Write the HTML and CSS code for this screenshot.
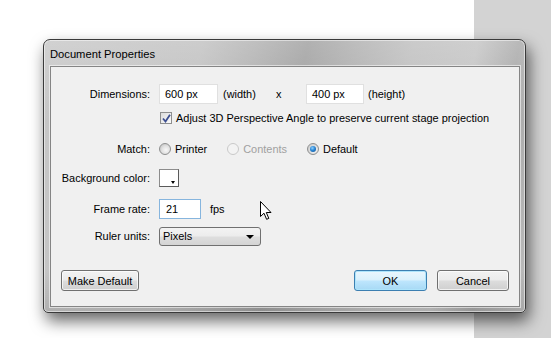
FILE: index.html
```html
<!DOCTYPE html>
<html>
<head>
<meta charset="utf-8">
<link rel="stylesheet" href="styles.css">
</head>
<body>
<div class="desk"></div>
<div class="strip"></div>

<div class="dialog">
  <div class="titlebar">Document Properties</div>
  <div class="content">
    <div class="row row-dim">
      <span class="label">Dimensions:</span>
      <span class="field w59">600 px</span>
      <span class="unit">(width)</span>
      <span class="times">x</span>
      <span class="field w58">400 px</span>
      <span class="unit2">(height)</span>
    </div>
    <div class="row row-check">
      <span class="label"></span>
      <span class="checkbox">
        <svg width="9" height="9" viewBox="0 0 9 9"><path d="M1 4.5 L3.5 7.5 L8 0.8" fill="none" stroke="#3d4f91" stroke-width="1.8"/></svg>
      </span>
      <span class="checktext">Adjust 3D Perspective Angle to preserve current stage projection</span>
    </div>
    <div class="row row-match">
      <span class="label">Match:</span>
      <span class="opts">
        <span class="opt"><span class="radio"></span>Printer</span>
        <span class="opt disabled"><span class="radio radio-off"></span>Contents</span>
        <span class="opt"><span class="radio radio-on"><span class="dot"></span></span>Default</span>
      </span>
    </div>
    <div class="row row-bg">
      <span class="label">Background color:</span>
      <span class="swatch"><span class="swatch-arrow"></span></span>
    </div>
    <div class="row row-fps">
      <span class="label">Frame rate:</span>
      <span class="field w42 focus">21</span>
      <span class="fps">fps</span>
    </div>
    <div class="row row-ruler">
      <span class="label">Ruler units:</span>
      <span class="select">Pixels<span class="sel-arrow"></span></span>
    </div>
    <div class="buttons">
      <span class="btn btn-make">Make Default</span>
      <span class="spacer"></span>
      <span class="btn btn-ok">OK</span>
      <span class="btn btn-cancel">Cancel</span>
    </div>
  </div>
</div>

<svg class="cursor" width="13" height="20" viewBox="0 0 13 20">
  <path d="M0.5 0.5 L0.5 15.5 L4 12.2 L6.6 18.3 L8.8 17.4 L6.3 11.5 L11 11.5 Z" fill="#fff" stroke="#000" stroke-width="1" stroke-linejoin="round"/>
</svg>
</body>
</html>
```

FILE: styles.css
```css
html, body {
  margin: 0;
  padding: 0;
}
body {
  width: 551px;
  height: 338px;
  display: flex;
  background: #fff;
  font-family: "Liberation Sans", Arial, sans-serif;
  font-size: 10.95px;
  color: #000;
  overflow: hidden;
  position: relative;
}
.desk {
  flex: 1;
  background: #fff;
}
.strip {
  width: 77px;
  background: #d3d3d3;
}

.dialog {
  position: absolute;
  left: 43px;
  top: 39px;
  width: 483px;
  height: 274px;
  box-sizing: border-box;
  border: 1px solid #3a3a3a;
  border-radius: 7px 7px 5px 5px;
  background:
    linear-gradient(180deg, rgba(255,255,255,0.2) 0%, rgba(255,255,255,0) 30%, rgba(0,0,0,0) 85%, rgba(0,0,0,0.1) 100%),
    linear-gradient(100deg, #c6c6c6 0%, #c0c0c0 30%, #b0b0b0 40%, #9e9e9e 50%, #acacac 58%, #bebebe 70%, #c3c3c3 82%, #a8a8a8 90%, #bcbcbc 100%);
  box-shadow: inset 0 0 0 1px rgba(255,255,255,0.5), 3px 8px 16px rgba(0,0,0,0.6);
  display: flex;
  flex-direction: column;
}
.titlebar {
  height: 26px;
  line-height: 28px;
  padding-left: 6px;
  font-size: 11.2px;
  color: #000;
  flex: none;
}
.content {
  margin: 0 5px 5px 6px;
  flex: 1;
  background: #f0f0f0;
  border: 1px solid #858585;
  box-shadow: 0 0 0 1px rgba(255,255,255,0.55);
  display: flex;
  flex-direction: column;
  padding: 17px 10px 15px 0;
}

.row {
  display: flex;
  align-items: center;
  height: 20px;
  white-space: nowrap;
}
.label {
  width: 99px;
  margin-right: 9px;
  text-align: right;
  flex: none;
}
.row-check { margin-top: 4px; }
.row-match { margin-top: 11px; }
.row-bg { margin-top: 9px; }
.row-fps { margin-top: 11px; }
.row-ruler { margin-top: 7px; }

.field {
  box-sizing: border-box;
  height: 20px;
  background: #fff;
  border: 1px solid #e0e0e0;
  padding-left: 5px;
  line-height: 18px;
}
.w59 { width: 59px; }
.w58 { width: 58px; }
.w42 { width: 42px; padding-left: 6px; }
.focus { border-color: #86b5de; }
.unit { width: 58px; padding-left: 5px; box-sizing: border-box; }
.times { width: 30px; }
.unit2 { padding-left: 4px; }
.fps { margin-left: 9px; }

.checkbox {
  box-sizing: border-box;
  width: 12px;
  height: 12px;
  margin-left: 1px;
  margin-right: 4px;
  border: 1px solid #8e8f8f;
  background: linear-gradient(135deg, #dcdcdc, #fbfbfb);
  display: flex;
  align-items: center;
  justify-content: center;
}

.opts {
  display: flex;
  gap: 20px;
}
.opt {
  display: flex;
  align-items: center;
}
.opt.disabled { color: #a0a0a0; }
.radio {
  box-sizing: border-box;
  width: 12px;
  height: 12px;
  margin-right: 4px;
  border-radius: 50%;
  border: 1px solid #8e8f8f;
  background: radial-gradient(circle at 60% 60%, #f8f8f8 0%, #e2e2e2 45%, #cfcfcf 70%, #f4f4f4 100%);
  display: flex;
  align-items: center;
  justify-content: center;
}
.radio-off {
  border-color: #c9c9c9;
  background: #f3f3f3;
}
.dot {
  width: 6px;
  height: 6px;
  border-radius: 50%;
  background: radial-gradient(circle at 40% 35%, #8fd1ff 0%, #2a86d4 45%, #0c4a8c 100%);
}

.swatch {
  box-sizing: border-box;
  width: 20px;
  height: 18px;
  background: #fff;
  border: 1px solid #8c8c8c;
  border-right-color: #5a5a5a;
  border-bottom-color: #5a5a5a;
  position: relative;
}
.swatch-arrow {
  position: absolute;
  right: 3px;
  bottom: 2px;
  width: 0;
  height: 0;
  border-left: 2.5px solid transparent;
  border-right: 2.5px solid transparent;
  border-top: 3px solid #000;
}

.select {
  box-sizing: border-box;
  width: 102px;
  height: 19px;
  border: 1px solid #707070;
  border-radius: 3px;
  background: linear-gradient(180deg, #f3f3f3 0%, #ececec 48%, #dedede 52%, #d4d4d4 100%);
  padding-left: 3px;
  line-height: 16px;
  position: relative;
}
.sel-arrow {
  position: absolute;
  right: 6px;
  top: 7px;
  width: 0;
  height: 0;
  border-left: 4px solid transparent;
  border-right: 4px solid transparent;
  border-top: 4px solid #000;
}

.buttons {
  margin-top: auto;
  display: flex;
  align-items: center;
  padding-left: 10px;
}
.spacer { flex: 1; }
.btn {
  box-sizing: border-box;
  height: 21px;
  border: 1px solid #707070;
  border-radius: 3px;
  background: linear-gradient(180deg, #f2f2f2 0%, #ebebeb 48%, #dddddd 52%, #cfcfcf 100%);
  box-shadow: inset 0 0 0 1px rgba(255,255,255,0.7);
  display: flex;
  align-items: center;
  justify-content: center;
}
.btn-make { width: 78px; }
.btn-ok {
  width: 73px;
  border-color: #3c7fb1;
  background: linear-gradient(180deg, #eaf6fd 0%, #d9f0fc 48%, #bee6fd 52%, #a7d9f5 100%);
  box-shadow: inset 0 0 0 1px #aee4fb;
}
.btn-cancel {
  width: 72px;
  margin-left: 10px;
}

.cursor {
  position: absolute;
  left: 260px;
  top: 201px;
}
```
